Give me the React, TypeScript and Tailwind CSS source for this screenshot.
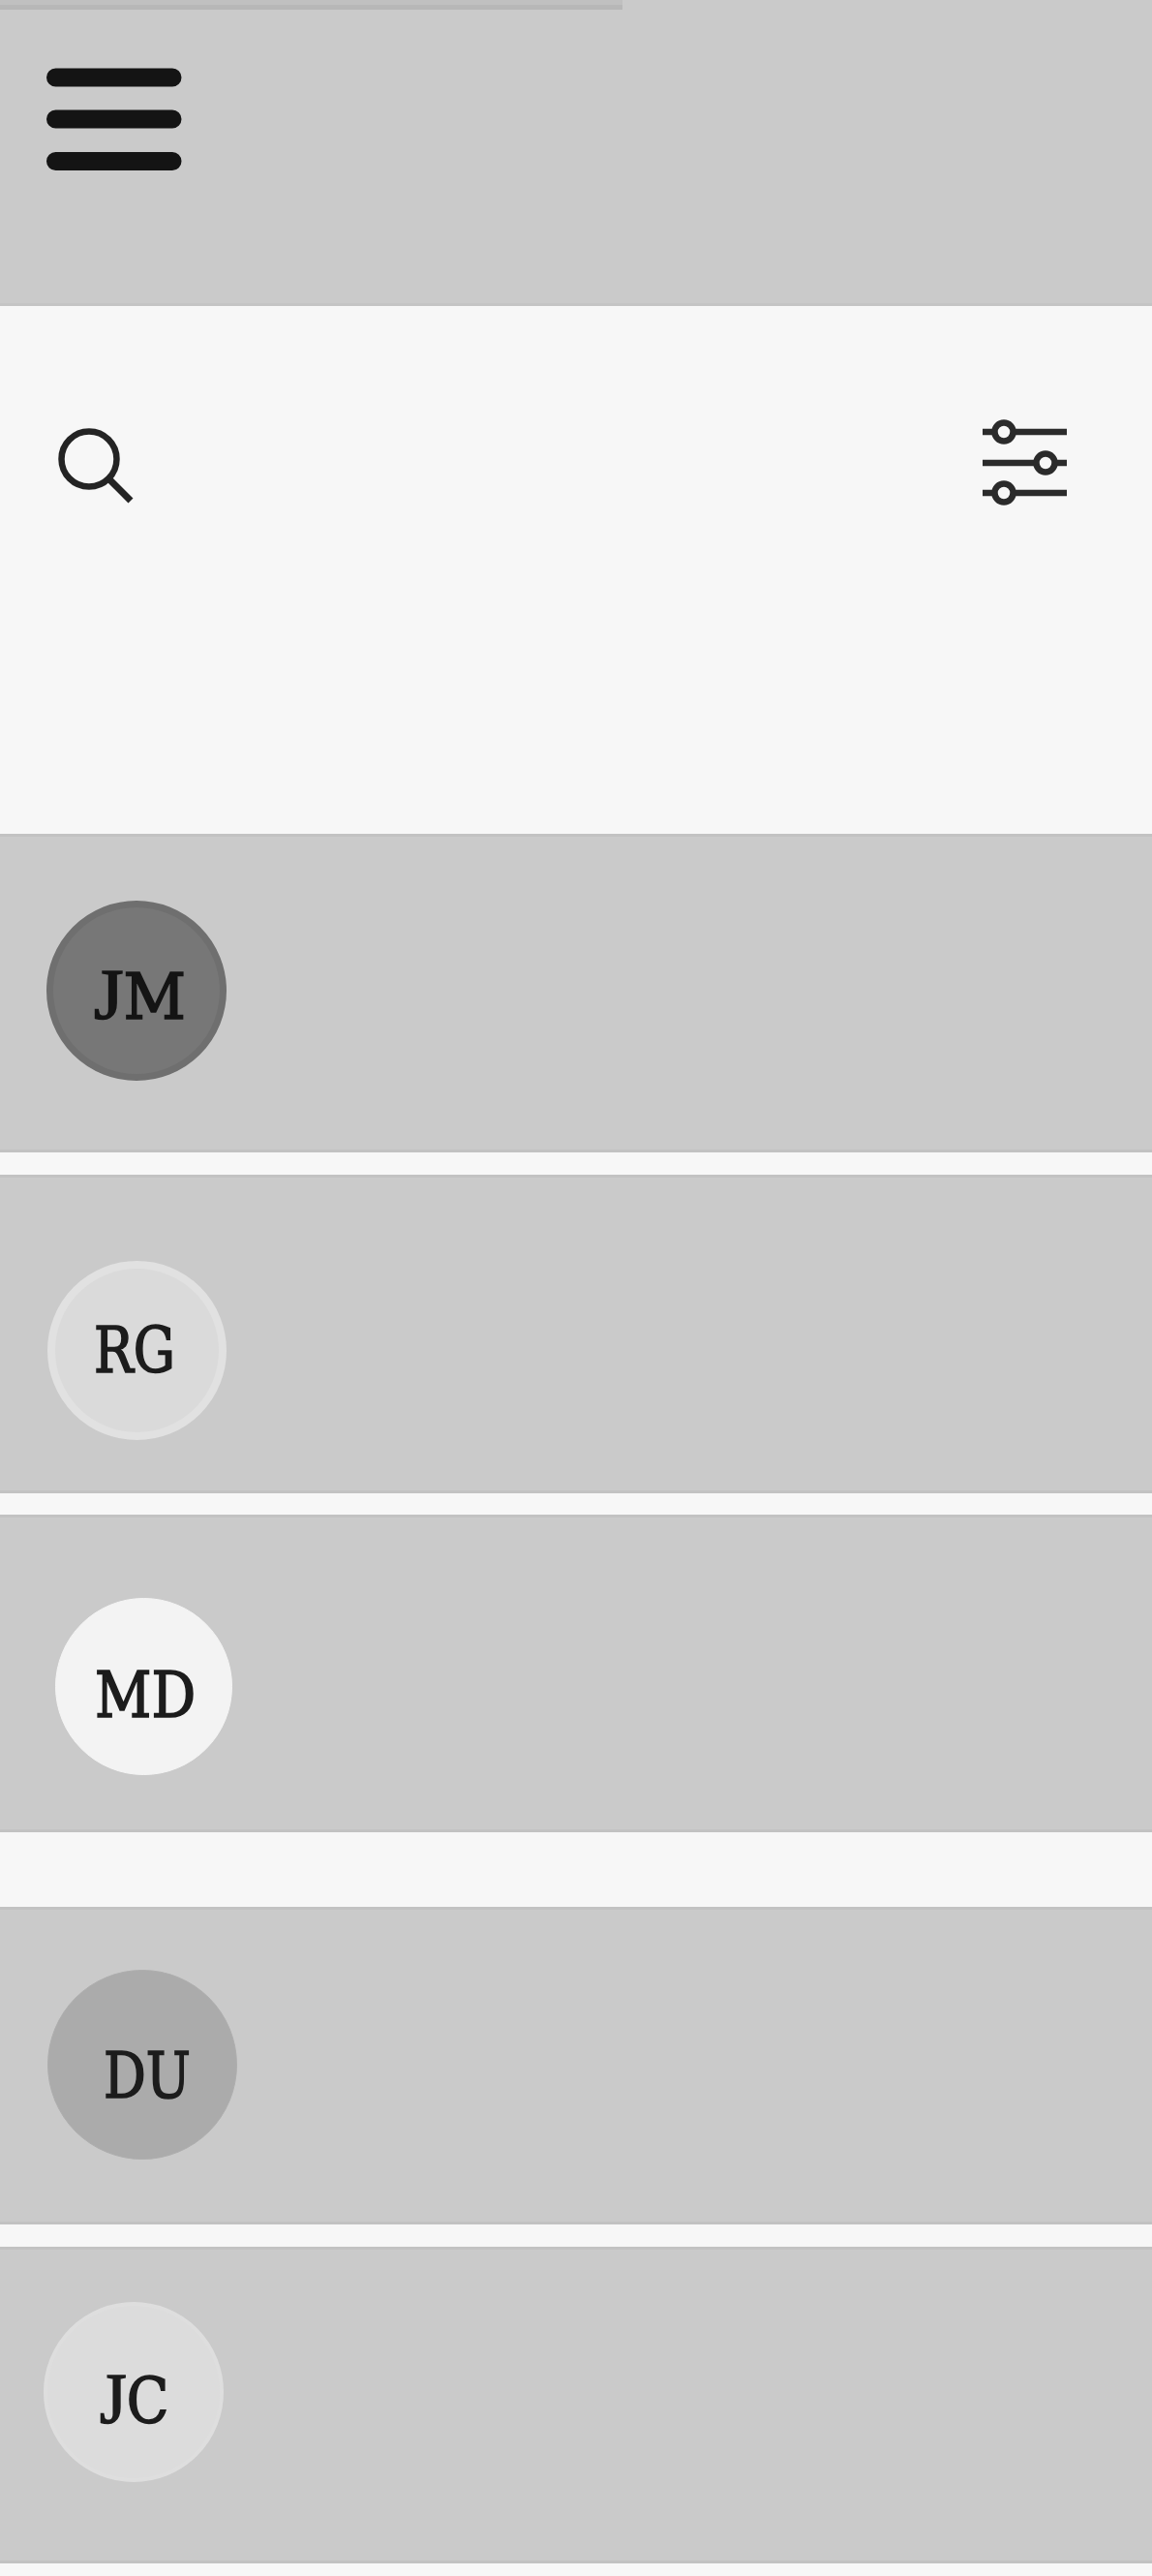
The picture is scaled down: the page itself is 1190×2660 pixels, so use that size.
type Contact = {
  initials: string;
  row: string;
  avatar: string;
  label: string;
};

const contacts: Contact[] = [
  {
    initials: "JM",
    row: "h-[329px] pl-[48px] pt-[66px]",
    avatar: "size-[186px] bg-[#777777] border-[7px] border-[#6f6f6f] pl-[42px] pt-[59px]",
    label: "scale-x-[1.06] text-[#141414]",
  },
  {
    initials: "RG",
    row: "mt-[23px] h-[329px] pl-[49px] pt-[86px]",
    avatar: "size-[185px] bg-[#dadada] border-[8px] border-[#e1e1e1] pl-[40px] pt-[51px]",
    label: "scale-x-[0.91] text-[#1c1c1c]",
  },
  {
    initials: "MD",
    row: "mt-[22px] h-[328px] pl-[57px] pt-[83px]",
    avatar: "size-[183px] bg-[#f3f3f3] border-[1px] border-[#f5f5f5] pl-[40px] pt-[66px]",
    label: "scale-x-[0.96] text-[#1c1c1c]",
  },
  {
    initials: "DU",
    row: "mt-[77px] h-[328px] pl-[49px] pt-[62px]",
    avatar: "size-[196px] bg-[#ababab] border-[1px] border-[#aeaeae] pl-[57px] pt-[75px]",
    label: "scale-x-[0.92] text-[#1c1c1c]",
  },
  {
    initials: "JC",
    row: "mt-[23px] h-[327px] pl-[45px] pt-[54px]",
    avatar: "size-[186px] bg-[#dcdcdc] border-[4px] border-[#dedede] pl-[54px] pt-[65px]",
    label: "scale-x-[0.96] text-[#1c1c1c]",
  },
];

function MenuIcon() {
  return (
    <svg className="block" width="142" height="108" viewBox="0 0 142 108" fill="none" stroke="#141414" strokeWidth="19" strokeLinecap="round">
      <path d="M11.500 10H132M11.500 53H132M11.500 96.500H132" />
    </svg>
  );
}

function SearchIcon() {
  return (
    <svg className="block" width="78" height="78" viewBox="0 0 78 78" fill="none" stroke="#242424">
      <circle cx="32" cy="32" r="28.500" strokeWidth="6.500" />
      <path d="M53 53L75 75" strokeWidth="7" />
    </svg>
  );
}

function FilterIcon() {
  return (
    <svg className="block" width="90" height="94" viewBox="0 0 90 94" fill="none" stroke="#2b2b2b" strokeWidth="6.500">
      <path d="M1 15H14M32 15H88M1 47H55M77 47H88M1 78H14M32 78H88" />
      <circle cx="23" cy="15" r="9.500" />
      <circle cx="66" cy="47" r="9.500" />
      <circle cx="23" cy="78" r="9.500" />
    </svg>
  );
}

export default function App() {
  return (
    <div className="h-[2660px] w-[1190px] overflow-hidden bg-[#f7f7f7]">
      <header className="h-[316px] border-b-[3px] border-[#c4c4c4] bg-[#cacaca]">
        <div className="h-[10px] w-[643px] border-b-[5px] border-[#b7b7b7] bg-[#c0c0c0]" />
        <button aria-label="Menu" className="ml-[46px] mt-[60px] block">
          <MenuIcon />
        </button>
      </header>

      <section className="flex h-[545px] items-start justify-between pl-[60px] pr-[86px] pt-[115px]">
        <button aria-label="Search" className="mt-[11px] block">
          <SearchIcon />
        </button>
        <button aria-label="Filters" className="block">
          <FilterIcon />
        </button>
      </section>

      <main>
        {contacts.map(({ initials, row, avatar, label }) => (
          <div key={initials} className={`border-y-[3px] border-[#c2c2c2] bg-[#cacaca] ${row}`}>
            <div className={`flex items-start rounded-full ${avatar}`}>
              <span
                className={`block origin-left whitespace-nowrap font-['DejaVu_Serif_Condensed','DejaVu_Serif',serif] text-[66px] leading-[67px] [font-stretch:condensed] [-webkit-text-stroke:1.6px_currentColor] ${label}`}
              >
                {initials.startsWith("J") ? (
                  <>
                    <span className="font-['Liberation_Serif',serif] text-[74px] leading-[0]">J</span>
                    {initials.slice(1)}
                  </>
                ) : (
                  initials
                )}
              </span>
            </div>
          </div>
        ))}
      </main>
    </div>
  );
}
